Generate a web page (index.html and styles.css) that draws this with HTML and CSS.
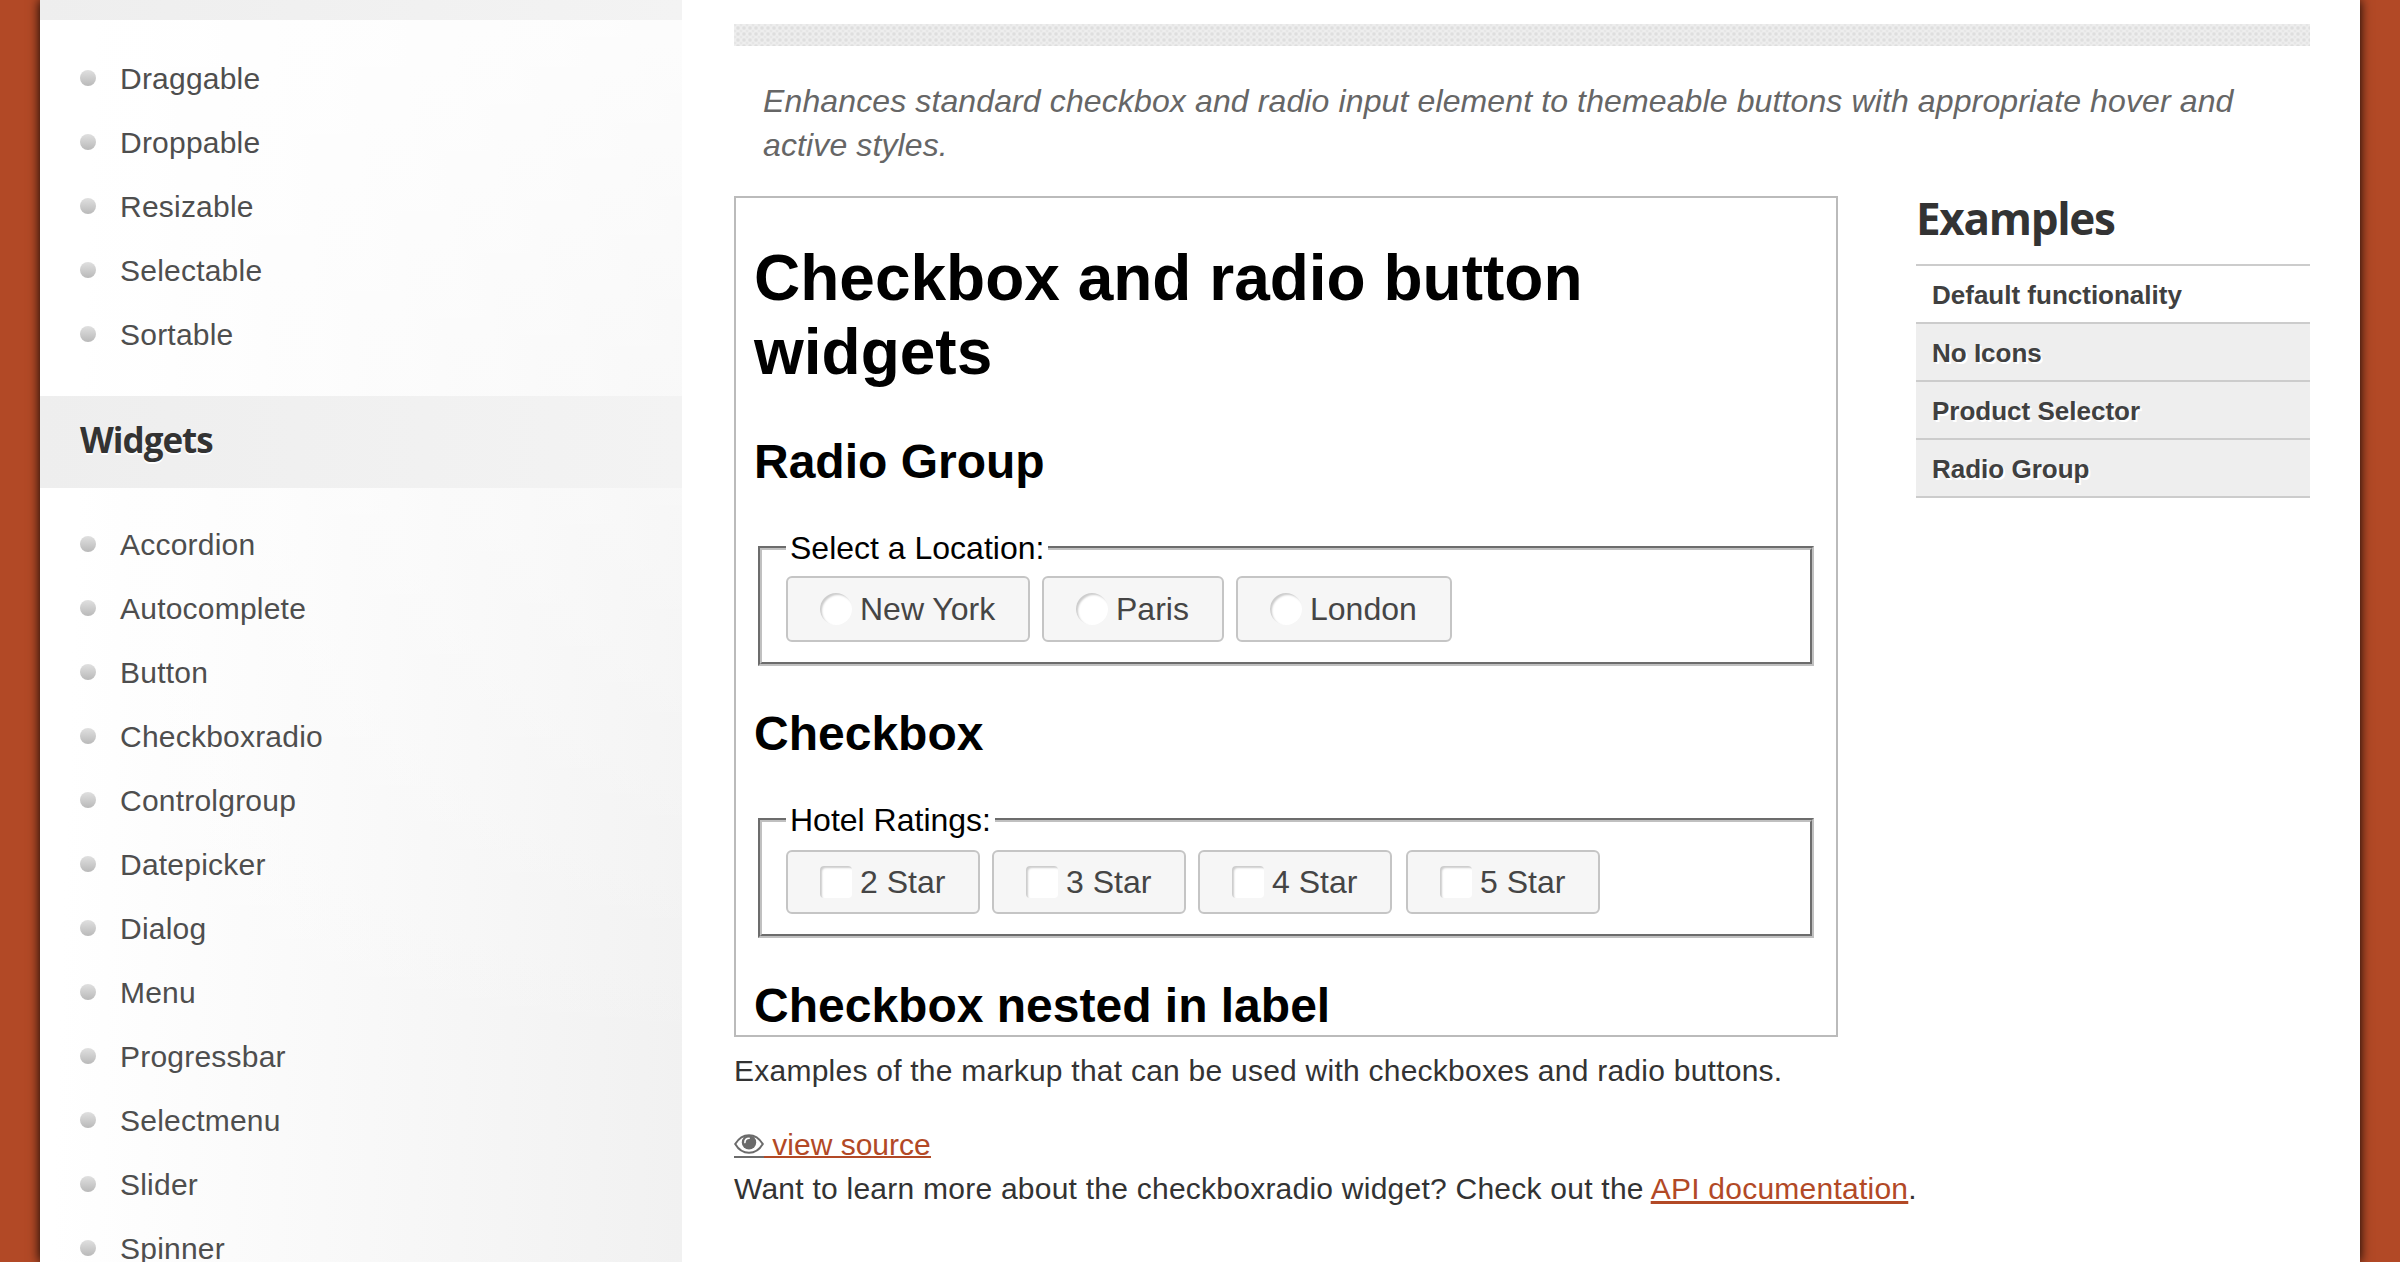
FILE: index.html
```html
<!DOCTYPE html>
<html lang="en">
<head>
<meta charset="utf-8">
<title>Checkboxradio | jQuery UI</title>
<link rel="stylesheet" href="styles.css">
</head>
<body>
<div class="page">
  <aside class="sidebar">
    <h3 class="side-title side-title-cut"></h3>
    <ul class="side-list interactions">
      <li><span>Draggable</span></li>
      <li><span>Droppable</span></li>
      <li><span>Resizable</span></li>
      <li><span>Selectable</span></li>
      <li><span>Sortable</span></li>
    </ul>
    <h3 class="side-title"><span>Widgets</span></h3>
    <ul class="side-list widgets">
      <li><span>Accordion</span></li>
      <li><span>Autocomplete</span></li>
      <li><span>Button</span></li>
      <li><span>Checkboxradio</span></li>
      <li><span>Controlgroup</span></li>
      <li><span>Datepicker</span></li>
      <li><span>Dialog</span></li>
      <li><span>Menu</span></li>
      <li><span>Progressbar</span></li>
      <li><span>Selectmenu</span></li>
      <li><span>Slider</span></li>
      <li><span>Spinner</span></li>
    </ul>
  </aside>
  <main class="content">
    <div class="strip"></div>
    <p class="desc">Enhances standard checkbox and radio input element to themeable buttons with appropriate hover and<br>active styles.</p>
    <div class="columns">
      <section class="demo">
        <h1>Checkbox and radio button widgets</h1>
        <h2 class="first">Radio Group</h2>
        <fieldset>
          <legend>Select a Location:</legend>
          <div class="choices">
            <label class="choice w-ny"><i class="mark round"></i><span>New York</span></label>
            <label class="choice w-paris"><i class="mark round"></i><span>Paris</span></label>
            <label class="choice w-london"><i class="mark round"></i><span>London</span></label>
          </div>
        </fieldset>
        <h2>Checkbox</h2>
        <fieldset>
          <legend>Hotel Ratings:</legend>
          <div class="choices stars">
            <label class="choice"><i class="mark"></i><span>2 Star</span></label>
            <label class="choice"><i class="mark"></i><span>3 Star</span></label>
            <label class="choice"><i class="mark"></i><span>4 Star</span></label>
            <label class="choice"><i class="mark"></i><span>5 Star</span></label>
          </div>
        </fieldset>
        <h2>Checkbox nested in label</h2>
      </section>
      <aside class="examples">
        <h2>Examples</h2>
        <ul>
          <li class="active"><span>Default functionality</span></li>
          <li><span>No Icons</span></li>
          <li><span>Product Selector</span></li>
          <li><span>Radio Group</span></li>
        </ul>
      </aside>
    </div>
    <p class="note">Examples of the markup that can be used with checkboxes and radio buttons.</p>
    <div class="source"><a href="#"><span class="eye"><svg viewBox="0 0 30 20"><path d="M1.200 10C4.500 4.600 9.500 1.200 15 1.200S25.500 4.600 28.800 10C25.500 15.600 20.500 18.800 15 18.800S4.500 15.600 1.200 10Z" fill="none" stroke="#6b6b6b" stroke-width="2"/><circle cx="15" cy="8.400" r="7.200" fill="#6b6b6b"/><path d="M10.900 8.600C10.900 6 12.600 4.300 15.200 4.300" fill="none" stroke="#fff" stroke-width="1.600" stroke-linecap="round"/></svg></span><span class="source-text">&nbsp;view source</span></a></div>
    <p class="more">Want to learn more about the checkboxradio widget? Check out the <a href="#">API documentation</a>.</p>
  </main>
</div>
</body>
</html>
```
FILE: styles.css
```css
* { box-sizing: border-box; }
html, body { margin: 0; height: 1262px; overflow: hidden; }
body {
  background: #b24926;
  font-family: "Liberation Sans", Arial, sans-serif;
  color: #333;
}
h1, h2, h3, p, ul { margin: 0; padding: 0; }
ul { list-style: none; }
a { color: #b24926; }
.page {
  display: flex;
  height: 1262px;
  margin: 0 40px;
  background: #fff;
  box-shadow: 0 0 11px #000;
}
.sidebar {
  width: 642px;
  flex: none;
  overflow: hidden;
  background:
    linear-gradient(180deg, rgba(255, 255, 255, .8), rgba(255, 255, 255, 0) 85%),
    linear-gradient(92deg, #fff 8%, #f1f1f1 100%);
}
.side-title {
  height: 92px;
  display: flex;
  align-items: center;
  padding: 0 0 5px 40px;
  background: linear-gradient(90deg, #eee, #f3f3f3);
  font: bold 35px/1 "Open Sans", sans-serif;
  text-shadow: 0 2px 0 #fff;
}
.side-title-cut { height: 20px; }
.side-title span { letter-spacing: -1px; }
.interactions { padding: 26px 0 30px; }
.widgets { padding-top: 24px; }
.side-list li {
  display: flex;
  align-items: center;
  height: 64px;
  padding-left: 40px;
  font-size: 30px;
  letter-spacing: .22px;
  color: #4e4e4e;
}
.side-list span { padding-top: 1px; }
.side-list li::before {
  content: "";
  width: 16px;
  height: 16px;
  margin-right: 24px;
  border-radius: 50%;
  background: linear-gradient(#e0e0e0, #b9b9b9);
}
.content { width: 1678px; padding: 24px 50px 0 52px; }
.strip {
  height: 22px;
  background-color: #eee;
  background-image: radial-gradient(circle, #dedede 1px, transparent 2.5px), radial-gradient(circle, #e4e4e4 .5px, transparent 2px);
  background-size: 6px 6px, 6px 6px;
  background-position: 1px 1px, 4px 4px;
}
.desc {
  margin: 33px 0 29px;
  padding-left: 29px;
  font-size: 32px;
  line-height: 44px;
  letter-spacing: .12px;
  font-style: italic;
  color: #666;
  white-space: nowrap;
}
.columns { display: flex; justify-content: space-between; }
.demo {
  width: 1104px;
  height: 841px;
  padding: 0 22px 0 18px;
  border: 2px solid #bbb;
  overflow: hidden;
  color: #000;
}
.demo h1 { font-size: 64px; line-height: 74px; margin-top: 43px; }
.demo h2 { font-size: 48px; line-height: 56px; margin-top: 40px; }
.demo .first { margin-top: 45px; }
fieldset {
  height: 136px;
  margin: 40px 0 0 4px;
  padding: 0 24px;
  border: 4px groove #c0c0c0;
  min-width: 0;
}
legend { font-size: 32px; line-height: 36px; padding: 0 4px; }
.choices { display: flex; gap: 12px; margin-top: 10px; }
.stars { margin-top: 12px; }
.choice {
  display: flex;
  align-items: center;
  height: 66px;
  padding-left: 32px;
  border: 2px solid #c5c5c5;
  border-radius: 6px;
  background: #f6f6f6;
  color: #454545;
  font-size: 32px;
  white-space: nowrap;
}
.w-ny { width: 244px; }
.w-paris { width: 182px; }
.w-london { width: 216px; }
.stars .choice { width: 194px; height: 64px; }
.stars .choice:last-child { margin-left: 2px; }
.mark {
  width: 32px;
  height: 32px;
  margin-right: 8px;
  border-radius: 4px;
  background: #fff;
  box-shadow: inset 2px 2px 2px #ccc;
}
.round { border-radius: 50%; }
.examples { width: 394px; }
.examples h2 {
  font: bold 44px/44px "Open Sans", sans-serif;
  letter-spacing: -1.3px;
  margin-bottom: 24px;
}
.examples ul { border-top: 2px solid #ccc; }
.examples li {
  height: 58px;
  padding-left: 16px;
  border-bottom: 2px solid #ccc;
  background: #eee;
  font-size: 26px;
  line-height: 59px;
  font-weight: bold;
  color: #404040;
  text-shadow: 2px 2px 0 #fff;
}
.examples .active { background: #fff; }
.note, .more, .source { font-size: 30px; line-height: 44px; white-space: nowrap; }
.note, .more { letter-spacing: .24px; }
.note { margin-top: 12px; }
.source { height: 44px; margin-top: 30px; }
.source a { display: flex; text-decoration: none; }
.eye, .source-text { height: 35px; border-bottom: 2px solid; }
.eye { width: 30px; border-color: #6b6b6b; padding-top: 11px; }
.eye svg { display: block; width: 30px; height: 20px; }
```
